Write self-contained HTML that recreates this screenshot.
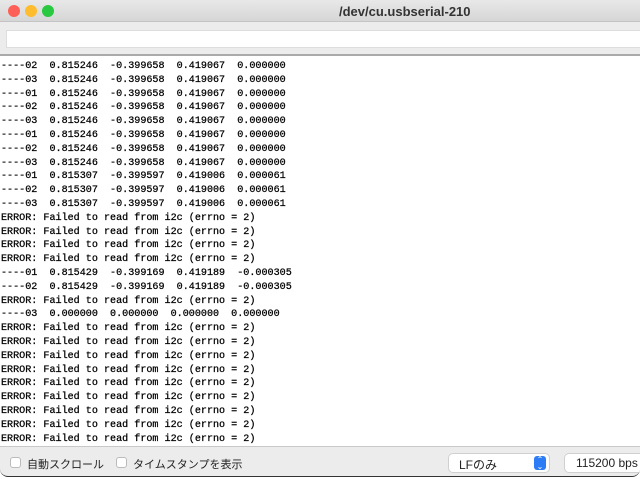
<!DOCTYPE html>
<html><head><meta charset="utf-8"><style>
*{margin:0;padding:0;box-sizing:border-box}
body{width:640px;height:480px;overflow:hidden;background:#fff;position:relative;font-family:"Liberation Sans","Noto Sans CJK JP",sans-serif}
.win{position:absolute;left:0;top:0;width:640px;height:477px;background:#ececec;border-radius:0 0 8px 8px;overflow:hidden;border-bottom:1px solid #333}
.title{position:absolute;top:0;left:0;width:640px;height:22px;background:linear-gradient(#e8e8e8,#d6d6d6);border-bottom:1px solid #c4c4c4}
.dot{position:absolute;top:5px;width:12px;height:12px;border-radius:50%}
.ttl{position:absolute;left:339px;top:4px;font-size:13px;font-weight:bold;color:#333}
.inp{position:absolute;left:6px;top:30px;width:640px;height:18px;background:#fff;border:1px solid #ddd}
.sep{position:absolute;top:54px;left:0;width:640px;height:2px;background:#aaa}
.out{position:absolute;top:56px;left:0;width:640px;height:391px;background:#fff;border-bottom:1px solid #c8c8c8;padding-top:4px}
.out pre{font-family:"Liberation Mono",monospace;font-size:10.1px;line-height:13.8px;color:#000;padding-left:1px;-webkit-text-stroke:0.25px #000}
.bar{position:absolute;top:448px;left:0;width:640px;height:29px;font-size:11px;color:#222}
.cb{position:absolute;top:9px;width:11px;height:11px;background:#fff;border:1px solid #bbb;border-radius:3px}
.lbl{position:absolute;top:8px}
.sel{position:absolute;left:449px;top:6px;width:100px;height:18px;background:#fff;border-radius:4px;box-shadow:0 0 0 1px #d0d0d0;font-size:12px;padding:2px 0 0 10px}
.arr{position:absolute;right:3px;top:2px;width:12px;height:14px;background:#2c7cf6;border-radius:3px;color:#fff;font-size:8px;line-height:7px;text-align:center}
.bps{position:absolute;left:565px;top:6px;width:90px;height:18px;background:#fff;border-radius:4px;box-shadow:0 0 0 1px #d0d0d0;font-size:12px;padding:2px 0 0 11px}
</style></head><body>
<div class="win">
<div class="title">
<div class="dot" style="left:8px;background:#fe5f57"></div>
<div class="dot" style="left:25px;background:#febc2e"></div>
<div class="dot" style="left:42px;background:#28c840"></div>
<div class="ttl">/dev/cu.usbserial-210</div>
</div>
<div class="inp"></div>
<div class="sep"></div>
<div class="out"><pre>----02  0.815246  -0.399658  0.419067  0.000000
----03  0.815246  -0.399658  0.419067  0.000000
----01  0.815246  -0.399658  0.419067  0.000000
----02  0.815246  -0.399658  0.419067  0.000000
----03  0.815246  -0.399658  0.419067  0.000000
----01  0.815246  -0.399658  0.419067  0.000000
----02  0.815246  -0.399658  0.419067  0.000000
----03  0.815246  -0.399658  0.419067  0.000000
----01  0.815307  -0.399597  0.419006  0.000061
----02  0.815307  -0.399597  0.419006  0.000061
----03  0.815307  -0.399597  0.419006  0.000061
ERROR: Failed to read from i2c (errno = 2)
ERROR: Failed to read from i2c (errno = 2)
ERROR: Failed to read from i2c (errno = 2)
ERROR: Failed to read from i2c (errno = 2)
----01  0.815429  -0.399169  0.419189  -0.000305
----02  0.815429  -0.399169  0.419189  -0.000305
ERROR: Failed to read from i2c (errno = 2)
----03  0.000000  0.000000  0.000000  0.000000
ERROR: Failed to read from i2c (errno = 2)
ERROR: Failed to read from i2c (errno = 2)
ERROR: Failed to read from i2c (errno = 2)
ERROR: Failed to read from i2c (errno = 2)
ERROR: Failed to read from i2c (errno = 2)
ERROR: Failed to read from i2c (errno = 2)
ERROR: Failed to read from i2c (errno = 2)
ERROR: Failed to read from i2c (errno = 2)
ERROR: Failed to read from i2c (errno = 2)</pre></div>
<div class="bar">
<div class="cb" style="left:10px"></div><div class="lbl" style="left:27px">自動スクロール</div>
<div class="cb" style="left:116px"></div><div class="lbl" style="left:133px">タイムスタンプを表示</div>
<div class="sel">LFのみ<div class="arr">&#8963;<br>&#8964;</div></div>
<div class="bps">115200 bps</div>
</div>
</div>
</body></html>
